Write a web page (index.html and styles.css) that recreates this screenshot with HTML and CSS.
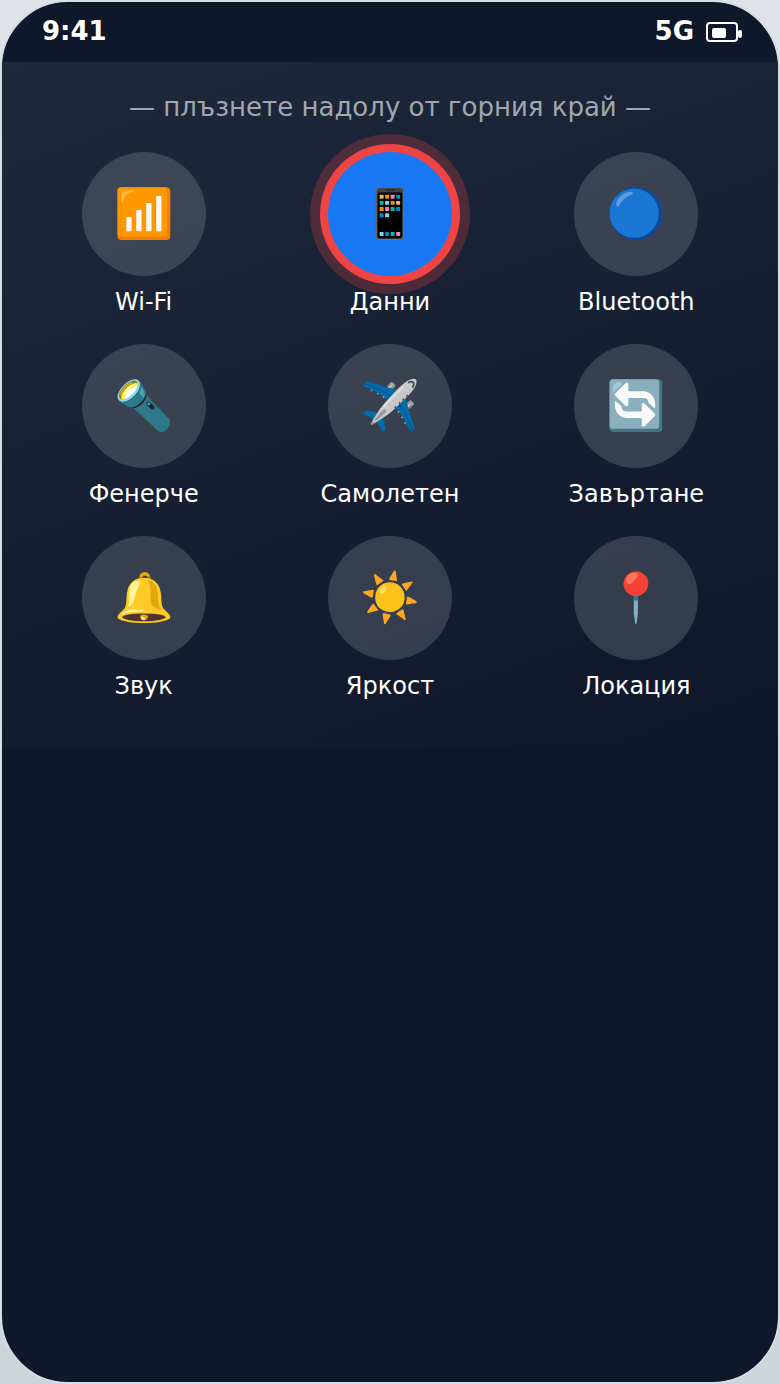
FILE: index.html
```html
<!DOCTYPE html>
<html lang="bg">
<head>
<meta charset="utf-8">
<title>Бързи настройки</title>
<link rel="stylesheet" href="styles.css">
</head>
<body>
<main class="phone">
  <header class="status">
    <span>9:41</span>
    <div class="status-right">
      <span>5G</span>
      <span class="battery"><span class="battery-level"></span></span>
    </div>
  </header>
  <section class="panel">
    <p class="hint">— плъзнете надолу от горния край —</p>
    <div class="tiles">
      <button class="tile" type="button"><span class="disc">📶</span><span class="label">Wi-Fi</span></button>
      <button class="tile" type="button"><span class="disc active">📱</span><span class="label">Данни</span></button>
      <button class="tile" type="button"><span class="disc">🔵</span><span class="label">Bluetooth</span></button>
      <button class="tile" type="button"><span class="disc">🔦</span><span class="label">Фенерче</span></button>
      <button class="tile" type="button"><span class="disc">✈️</span><span class="label">Самолетен</span></button>
      <button class="tile" type="button"><span class="disc">🔄</span><span class="label">Завъртане</span></button>
      <button class="tile" type="button"><span class="disc">🔔</span><span class="label">Звук</span></button>
      <button class="tile" type="button"><span class="disc">☀️</span><span class="label">Яркост</span></button>
      <button class="tile" type="button"><span class="disc">📍</span><span class="label">Локация</span></button>
    </div>
  </section>
</main>
</body>
</html>
```
FILE: styles.css
```css
* { box-sizing: border-box; }
body {
  margin: 0;
  background: linear-gradient(#dfe3e8, #cfd3da);
  font-family: "DejaVu Sans", sans-serif;
  color: #fff;
}
.phone {
  min-height: 100vh;
  border: 2px solid #d5dee5;
  border-radius: 68px;
  background: #0f172a;
  overflow: hidden;
}
.status {
  display: flex;
  justify-content: space-between;
  align-items: center;
  height: 60px;
  padding: 0 40px 2px;
  font-size: 26px;
  font-weight: 700;
}
.status-right { display: flex; align-items: center; gap: 12px; }
.battery {
  position: relative;
  width: 32px;
  height: 20px;
  margin-top: 2px;
  padding: 4px;
  border: 2px solid #fff;
  border-radius: 4px;
}
.battery::after {
  content: "";
  position: absolute;
  top: 6px;
  right: -6px;
  width: 4px;
  height: 8px;
  border-radius: 2px;
  background: #fff;
}
.battery-level { display: block; width: 14px; height: 10px; border-radius: 2px; background: #fff; }
.panel {
  padding: 28px 32px 48px;
  background: linear-gradient(160deg, #1e293b, #0f172a);
}
.hint {
  margin: 0 0 28px;
  font-size: 26px;
  line-height: 34px;
  text-align: center;
  color: rgba(255, 255, 255, 0.6);
}
.tiles { display: grid; grid-template-columns: repeat(3, 1fr); gap: 28px 27px; }
.tile {
  display: flex;
  flex-direction: column;
  align-items: center;
  gap: 12px;
  padding: 0;
  border: 0;
  background: none;
  color: #fff;
  font: 24px/28px "DejaVu Sans", sans-serif;
}
.disc {
  display: flex;
  align-items: center;
  justify-content: center;
  width: 124px;
  height: 124px;
  padding-bottom: 2px;
  border-radius: 50%;
  background: rgba(255, 255, 255, 0.15);
  font-size: 48px;
  line-height: 56px;
}
.active {
  background: #1877f2;
  box-shadow: 0 0 0 8px #ef4444, 0 0 0 18px rgba(239, 68, 68, 0.25);
}
```
